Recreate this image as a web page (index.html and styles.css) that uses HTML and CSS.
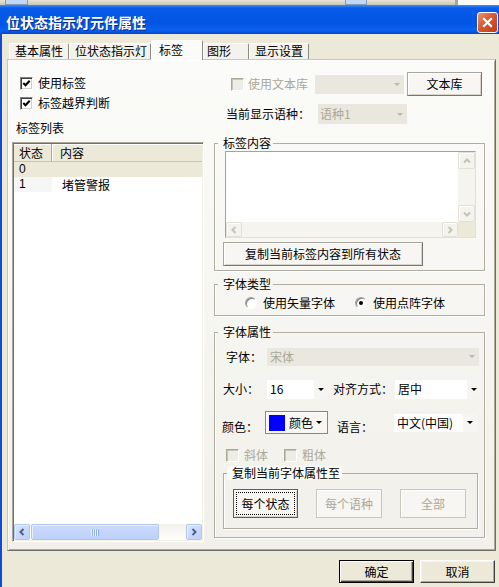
FILE: index.html
```html
<!DOCTYPE html>
<html lang="zh-CN">
  <head>
    <meta charset="UTF-8">
    <meta name="viewport" content="width=device-width, initial-scale=1.0">
    <title>位状态指示灯元件属性</title>
    <link rel="stylesheet" href="styles.css">
  </head>
  <body>
    <div class="behind">
      <span class="behind-box"></span>
      <span class="behind-box second"></span>
      <span class="behind-end"></span>
    </div>
    <div class="titlebar">
      <span class="title">位状态指示灯元件属性</span>
      <span class="close">
        <svg width="13" height="13" viewBox="0 0 13 13"><path d="M3 3 L10 10 M10 3 L3 10" stroke="#fff" stroke-width="2.2" stroke-linecap="square"/></svg>
      </span>
    </div>
    <div class="client">
      <div class="tabs">
        <div class="tab w60">基本属性</div>
        <div class="tab w82">位状态指示灯</div>
        <div class="tab active">标签</div>
        <div class="tab w46">图形</div>
        <div class="tab w60">显示设置</div>
      </div>
      <div class="panel">
        <!-- left: label list -->
        <div class="leftcol">
          <div class="check">
            <span class="cb"><svg width="9" height="9" viewBox="0 0 9 9"><path d="M1.3 4 L3.5 6.3 L7.7 1.8" fill="none" stroke="#000" stroke-width="2"/></svg></span>
            <span>使用标签</span>
          </div>
          <div class="check">
            <span class="cb"><svg width="9" height="9" viewBox="0 0 9 9"><path d="M1.3 4 L3.5 6.3 L7.7 1.8" fill="none" stroke="#000" stroke-width="2"/></svg></span>
            <span>标签越界判断</span>
          </div>
          <div class="caption">标签列表</div>
          <div class="listview">
            <div class="lv-head"><span class="col1">状态</span><span class="col2">内容</span></div>
            <div class="lv-body">
              <div class="lv-row selected"><span class="col1 num">0</span><span class="col2"></span></div>
              <div class="lv-row"><span class="col1 num sorted">1</span><span class="col2">堵管警报</span></div>
            </div>
            <div class="sb-h">
              <span class="sb-btn"><svg width="8" height="8" viewBox="0 0 8 8"><path d="M5.5 1 L2.5 4 L5.5 7" fill="none" stroke="#4D6185" stroke-width="2"/></svg></span>
              <span class="sb-thumb"><span class="grip"></span></span>
              <span class="sb-track"></span>
              <span class="sb-btn"><svg width="8" height="8" viewBox="0 0 8 8"><path d="M2.5 1 L5.5 4 L2.5 7" fill="none" stroke="#4D6185" stroke-width="2"/></svg></span>
            </div>
          </div>
        </div>

        <!-- right: label text and font settings -->
        <div class="rightcol">
          <div class="row lib-row">
            <span class="cb disabled"></span>
            <span class="gray lib-text">使用文本库</span>
            <div class="combo disabled lib-combo"><span class="val"></span><span class="drop"></span></div>
            <button class="pbtn lib-btn">文本库</button>
          </div>
          <div class="row lang-row">
            <span>当前显示语种：</span>
            <div class="combo disabled lang-combo"><span class="val">语种1</span><span class="drop"></span></div>
          </div>

          <fieldset class="group content-group">
            <legend>标签内容</legend>
            <div class="editbox">
              <div class="edit-area"></div>
              <div class="sb-v">
                <span class="sb-btn off"><svg width="8" height="8" viewBox="0 0 8 8"><path d="M1 5.5 L4 2.5 L7 5.5" fill="none" stroke="#C6C4B8" stroke-width="2"/></svg></span>
                <span class="sb-btn off"><svg width="8" height="8" viewBox="0 0 8 8"><path d="M1 2.5 L4 5.5 L7 2.5" fill="none" stroke="#C6C4B8" stroke-width="2"/></svg></span>
              </div>
              <div class="sb-h off">
                <span class="sb-btn off"><svg width="8" height="8" viewBox="0 0 8 8"><path d="M5.5 1 L2.5 4 L5.5 7" fill="none" stroke="#C6C4B8" stroke-width="2"/></svg></span>
                <span class="sb-btn off"><svg width="8" height="8" viewBox="0 0 8 8"><path d="M2.5 1 L5.5 4 L2.5 7" fill="none" stroke="#C6C4B8" stroke-width="2"/></svg></span>
              </div>
              <div class="corner"></div>
            </div>
            <button class="pbtn copy-btn">复制当前标签内容到所有状态</button>
          </fieldset>

          <fieldset class="group type-group">
            <legend>字体类型</legend>
            <div class="row radio-row">
              <span class="radio"></span><span class="radio-text">使用矢量字体</span>
              <span class="radio on second"></span><span class="radio-text">使用点阵字体</span>
            </div>
          </fieldset>

          <fieldset class="group attr-group">
            <legend>字体属性</legend>
            <div class="row font-row">
              <span class="lbl">字体：</span>
              <div class="combo disabled font-combo"><span class="val">宋体</span><span class="drop"></span></div>
            </div>
            <div class="row size-row">
              <span class="lbl">大小：</span>
              <div class="combo size-combo"><span class="val">16</span><span class="drop"></span></div>
              <span class="align-label">对齐方式：</span>
              <div class="combo align-combo"><span class="val">居中</span><span class="drop"></span></div>
            </div>
            <div class="row color-row">
              <span class="lbl">颜色：</span>
              <div class="colorbtn"><span class="swatch"></span><span class="name">颜色</span><span class="drop"></span></div>
              <span class="lang2-label">语言：</span>
              <div class="combo lang2-combo"><span class="val">中文(中国)</span><span class="drop"></span></div>
            </div>
            <div class="row style-row">
              <span class="cb disabled"></span><span class="gray cb-text">斜体</span>
              <span class="cb disabled second"></span><span class="gray cb-text">粗体</span>
            </div>
            <fieldset class="group copy-group">
              <legend>复制当前字体属性至</legend>
              <div class="copy-row">
                <button class="pbtn focus first">每个状态</button>
                <button class="pbtn off">每个语种</button>
                <button class="pbtn off">全部</button>
              </div>
            </fieldset>
          </fieldset>
        </div>
      </div>
      <div class="footer">
        <button class="btn default">确定</button>
        <button class="btn">取消</button>
      </div>
    </div>
  </body>
</html>
```

FILE: styles.css
```css
* {
    box-sizing: border-box;
}
body {
    margin: 0;
    width: 499px;
    height: 587px;
    overflow: hidden;
    background: #ECE9D8;
    color: #000;
    font-family: "Noto Sans CJK SC", "Liberation Sans", sans-serif;
    font-size: 12px;
    line-height: 14px;
}
button {
    font: inherit;
    color: inherit;
    margin: 0;
    padding: 0;
}
.gray {
    color: #ACA899;
}

/* window behind the dialog */
.behind {
    display: flex;
    height: 5px;
    background: linear-gradient(#E7E4D7, #C9C5B5);
}
.behind-box {
    width: 23px;
    margin-left: 5px;
    border: 1px solid #7F9DB9;
    border-top: 0;
    background: #C2D6F6;
}
.behind-box.second {
    width: 22px;
    margin-left: 317px;
}
.behind-end {
    width: 44px;
    margin-left: auto;
    border-left: 3px solid #A9A593;
    background: #FAFAF8;
}

/* title bar */
.titlebar {
    display: flex;
    align-items: center;
    justify-content: space-between;
    height: 29px;
    padding: 5px 1px 0 6px;
    background: linear-gradient(#3A8CFA 0, #0A5CE8 3px, #0458E6 10px, #0254E2 18px, #0A62F0 25px, #0446D6 29px);
}
.title {
    color: #fff;
    font-weight: bold;
    font-size: 14px;
    line-height: 16px;
    text-shadow: 1px 1px #0C2A8C;
}
.close {
    display: flex;
    align-items: center;
    justify-content: center;
    width: 21px;
    height: 21px;
    border: 1px solid #fff;
    border-radius: 3px;
    background: linear-gradient(135deg, #EC9474, #D65A33 45%, #C13B14);
}

.client {
    height: 553px;
    padding: 6px 4px 0 5px;
    border-left: 2px solid #0F4BD6;
}

/* tabs */
.tabs {
    display: flex;
    align-items: flex-end;
    height: 20px;
    margin-bottom: -1px;
    padding-left: 2px;
}
.tab {
    height: 16px;
    margin-bottom: 1px;
    padding-left: 5px;
    border: 1px solid #fff;
    border-bottom: 0;
    border-right-color: #8D8A7E;
    border-radius: 2px 2px 0 0;
    background: #F3F2EC;
    white-space: nowrap;
}
.tab.w60 { width: 60px; }
.tab.w82 { width: 82px; }
.tab.w46 { width: 46px; padding-left: 3px; }
.tab.active {
    position: relative;
    z-index: 1;
    width: 52px;
    height: 20px;
    margin-bottom: 0;
    padding: 2px 0 0 7px;
    background: #FBFBF9;
}

.panel {
    display: flex;
    align-items: flex-start;
    width: 489px;
    height: 492px;
    border: 1px solid;
    border-color: #C9C6BA #716F64 #716F64 #C9C6BA;
    box-shadow: inset 1px 1px #fff, inset -1px -1px #ACA899;
    background: linear-gradient(#FBFBF9, #F1F0EA);
}

/* checkboxes and radios */
.check {
    display: flex;
    align-items: center;
    gap: 5px;
    height: 20px;
}
.cb {
    display: flex;
    align-items: center;
    justify-content: center;
    flex-shrink: 0;
    width: 13px;
    height: 13px;
    background: #fff;
    border: 1px solid;
    border-color: #808080 #fff #fff #808080;
    box-shadow: inset 1px 1px #404040, inset -1px -1px #D4D0C8;
}
.cb.disabled {
    background: #EDECE5;
    border-color: #ACA899 #fff #fff #ACA899;
    box-shadow: inset 1px 1px #C9C6B7;
}
.radio {
    display: flex;
    align-items: center;
    justify-content: center;
    flex-shrink: 0;
    width: 12px;
    height: 12px;
    border-radius: 50%;
    background: #fff;
    border: 1px solid;
    border-color: #A0A0A0 #fff #fff #A0A0A0;
    box-shadow: inset 1px 1px #808080;
}
.radio.on::after {
    content: "";
    width: 4px;
    height: 4px;
    border-radius: 50%;
    background: #000;
}

/* left column */
.leftcol {
    display: flex;
    flex-direction: column;
    width: 192px;
    margin-left: 4px;
    padding-top: 13px;
}
.leftcol .check {
    padding-left: 8px;
}
.caption {
    height: 20px;
    line-height: 20px;
    margin-top: 5px;
    padding-left: 4px;
}
.listview {
    display: flex;
    flex-direction: column;
    height: 400px;
    margin-top: 4px;
    padding: 1px;
    border: 1px solid;
    border-color: #ACA899 #fff #fff #ACA899;
    box-shadow: inset 1px 1px #716F64, inset -1px -1px #F1EFE2;
    background: #fff;
}
.lv-head {
    display: flex;
    height: 18px;
    line-height: 17px;
    background: #ECE9D8;
    border-bottom: 1px solid #C7C4B5;
    box-shadow: inset 0 1px #fff;
}
.col1 {
    width: 38px;
    padding-left: 5px;
}
.lv-head .col1 {
    border-right: 1px solid #ACA899;
    box-shadow: 1px 0 #fff;
}
.lv-head .col2 {
    padding-left: 8px;
}
.lv-body {
    flex: 1;
}
.lv-row {
    display: flex;
    height: 15px;
    line-height: 15px;
}
.lv-row .num {
    font-family: "Liberation Sans", sans-serif;
}
.lv-row.selected {
    background: #ECE9D8;
}
.lv-row .col2 {
    padding-left: 10px;
}
.col1.sorted {
    background: #F6F6F6;
}

/* scrollbars */
.sb-h {
    display: flex;
    height: 16px;
    background: linear-gradient(#F3F1EC, #FEFEFB);
}
.sb-btn {
    display: flex;
    align-items: center;
    justify-content: center;
    flex-shrink: 0;
    width: 16px;
    height: 16px;
    border: 1px solid #B2C6F3;
    border-radius: 2px;
    background: linear-gradient(135deg, #D6E2FE, #BDD0FA);
    box-shadow: inset 1px 1px #E8EFFE;
}
.sb-thumb {
    display: flex;
    align-items: center;
    justify-content: center;
    width: 128px;
    margin-left: 1px;
    border: 1px solid #B2C6F3;
    border-radius: 2px;
    background: linear-gradient(#CCDBFD, #BDD0FA);
    box-shadow: inset 1px 1px #E8EFFE;
}
.grip {
    width: 8px;
    height: 7px;
    background: repeating-linear-gradient(90deg, #EEF4FE 0 1px, #8CB0F8 1px 2px);
}
.sb-track {
    flex: 1;
}
.sb-btn.off {
    border-color: #E2E1D8;
    background: #F4F3EE;
    box-shadow: inset 1px 1px #fff;
}
.sb-v {
    display: flex;
    flex-direction: column;
    justify-content: space-between;
    background: #F5F4EF;
}
.sb-v .sb-btn {
    width: 17px;
    height: 17px;
}
.sb-h.off {
    justify-content: space-between;
    height: 15px;
    background: #F5F4EF;
}
.sb-h.off .sb-btn {
    height: 15px;
}

/* right column */
.rightcol {
    display: flex;
    flex-direction: column;
    width: 271px;
    margin-left: 10px;
}
.row {
    display: flex;
    align-items: center;
}
.combo {
    display: flex;
    align-items: center;
    flex-shrink: 0;
    background: #fff;
}
.combo .val {
    flex: 1;
    padding-left: 3px;
    white-space: nowrap;
}
.drop {
    display: flex;
    align-items: center;
    justify-content: center;
    align-self: stretch;
    width: 14px;
    background: #F6F5F1;
}
.drop::after {
    content: "";
    border-left: 3px solid transparent;
    border-right: 3px solid transparent;
    border-top: 3px solid #000;
}
.combo.disabled {
    background: #E9E7DE;
    color: #ACA899;
}
.combo.disabled .drop {
    background: transparent;
}
.combo.disabled .drop::after {
    border-top-color: #B9B7AB;
}
.pbtn {
    display: block;
    background: #F7F6F2;
    border: 1px solid;
    border-color: #A9A79D #77766E #77766E #A9A79D;
    box-shadow: inset 1px 1px #fff, inset -1px -1px #D8D6CB;
}
.pbtn.focus {
    border-color: #5E5D57;
    outline: 1px dotted #000;
    outline-offset: -4px;
}
.pbtn.off {
    color: #ACA899;
    border-color: #C9C7BC;
    box-shadow: inset 1px 1px #fff;
}

.lib-row {
    height: 24px;
    margin-top: 12px;
    padding-left: 17px;
}
.lib-text {
    margin-left: 4px;
}
.lib-combo {
    width: 89px;
    height: 19px;
    margin-left: 7px;
}
.lib-btn {
    width: 75px;
    height: 24px;
    margin-left: 3px;
}
.lang-row {
    height: 20px;
    margin-top: 8px;
    padding-left: 12px;
}
.lang-combo {
    width: 89px;
    height: 20px;
    margin-left: 8px;
}
.lang-combo .val {
    padding-left: 2px;
}

/* group boxes */
.group {
    min-width: 0;
    margin: 0;
    padding: 0;
    border: 1px solid #B1AEA1;
    box-shadow: inset 1px 0 #fff, 1px 1px #fff;
}
.group legend {
    margin-left: 3px;
    padding: 0 2px 0 5px;
    line-height: 14px;
}
.content-group {
    height: 135px;
    margin-top: 12px;
}
.type-group {
    height: 39px;
    margin-top: 6px;
}
.attr-group {
    height: 213px;
    margin-top: 9px;
}

.editbox {
    display: grid;
    grid-template-columns: 1fr 17px;
    grid-template-rows: 1fr 15px;
    width: 251px;
    height: 87px;
    margin: 1px 0 0 10px;
    border: 1px solid;
    border-color: #A6A496 #E3E1D6 #E3E1D6 #A6A496;
    background: #fff;
}
.corner {
    background: #ECE9D8;
}
.copy-btn {
    width: 200px;
    height: 24px;
    margin: 4px 0 0 8px;
}

.radio-row {
    height: 20px;
    margin-top: 2px;
    padding-left: 30px;
}
.radio-text {
    margin-left: 6px;
}
.radio.second {
    margin-left: 20px;
}

.font-row {
    height: 19px;
    margin-top: 8px;
    padding-left: 11px;
}
.font-row .lbl {
    width: 41px;
}
.font-combo {
    width: 212px;
    height: 18px;
}
.size-row {
    height: 20px;
    margin-top: 13px;
    padding-left: 8px;
}
.size-row .lbl {
    width: 44px;
}
.size-combo {
    width: 61px;
    height: 19px;
}
.align-label {
    width: 62px;
    margin-left: 5px;
}
.align-combo {
    width: 86px;
    height: 19px;
}
.color-row {
    height: 23px;
    margin-top: 12px;
    padding-left: 7px;
}
.color-row .lbl {
    width: 43px;
    padding-top: 8px;
}
.colorbtn {
    display: flex;
    align-items: center;
    width: 63px;
    height: 23px;
    padding-left: 3px;
    border: 1px solid #8A8980;
    background: #F7F6F2;
    box-shadow: inset 1px 1px #fff;
}
.swatch {
    width: 16px;
    height: 16px;
    background: #0000FF;
}
.colorbtn .name {
    margin-left: 4px;
}
.colorbtn .drop {
    width: 12px;
    background: transparent;
}
.lang2-label {
    width: 57px;
    margin-left: 9px;
    padding-top: 8px;
}
.lang2-combo {
    width: 83px;
    height: 18px;
}
.style-row {
    height: 18px;
    margin-top: 12px;
    padding-left: 11px;
}
.cb-text {
    margin-left: 5px;
}
.cb.second {
    margin-left: 16px;
}
.copy-group {
    width: 255px;
    height: 63px;
    margin: 2px 0 0 8px;
}
.copy-group legend {
    background: #FAFAF7;
}
.copy-row {
    display: flex;
    gap: 18px;
    margin-top: 9px;
    padding-left: 9px;
}
.copy-row .pbtn {
    width: 66px;
    height: 29px;
}
.copy-row .first {
    width: 65px;
}

/* dialog buttons */
.footer {
    display: flex;
    justify-content: flex-end;
    gap: 6px;
    margin-top: 9px;
}
.btn {
    width: 75px;
    height: 23px;
    background: #ECE9D8;
    border: 1px solid;
    border-color: #fff #404040 #404040 #fff;
    box-shadow: inset -1px -1px #ACA899, inset 1px 1px #F5F4EE;
}
.btn.default {
    border-color: #000;
    box-shadow: inset 1px 1px #fff, inset -1px -1px #404040, inset -2px -2px #ACA899;
}
```
